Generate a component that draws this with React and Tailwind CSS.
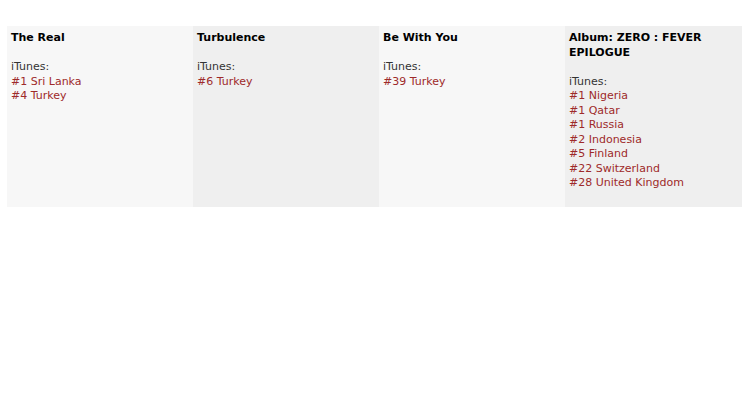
export default function App() {
  const cols = [
    { title: ["The Real"], items: ["#1 Sri Lanka", "#4 Turkey"], bg: "bg-[#f7f7f7]" },
    { title: ["Turbulence"], items: ["#6 Turkey"], bg: "bg-[#efefef]" },
    { title: ["Be With You"], items: ["#39 Turkey"], bg: "bg-[#f7f7f7]" },
    {
      title: ["Album: ZERO : FEVER", "EPILOGUE"],
      items: ["#1 Nigeria", "#1 Qatar", "#1 Russia", "#2 Indonesia", "#5 Finland", "#22 Switzerland", "#28 United Kingdom"],
      bg: "bg-[#efefef]",
    },
  ];
  return (
    <div className="w-[743px] h-[417px] bg-white pt-[26px] pl-[7px]" style={{ fontFamily: '"DejaVu Sans", Verdana, sans-serif' }}>
      <div className="grid grid-cols-[186px_186px_186px_177px] text-[11px] leading-[14.5px]">
        {cols.map((c, i) => (
          <div key={i} className={`${c.bg} pt-[5px] pb-[16px] pl-[4px] pr-[4px]`}>
            <div className="font-bold text-black">
              {c.title.map((t, j) => (
                <div key={j}>{t}</div>
              ))}
            </div>
            <div className="h-[14.5px]" />
            <div className="text-[#333]">iTunes:</div>
            {c.items.map((it, j) => (
              <div key={j} className="text-[#9e2a2a]">{it}</div>
            ))}
          </div>
        ))}
      </div>
    </div>
  );
}
